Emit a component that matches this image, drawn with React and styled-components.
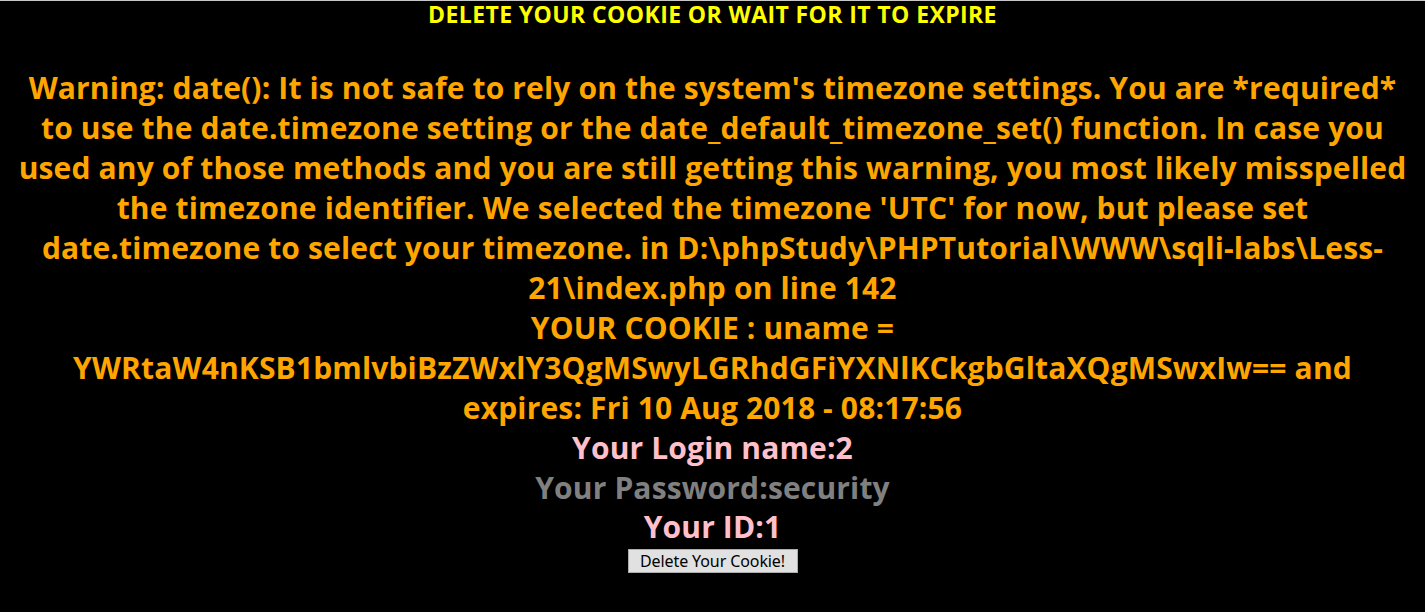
import React from 'react';
import styled, { createGlobalStyle } from 'styled-components';

const GlobalStyle = createGlobalStyle`
  html, body {
    margin: 0;
    padding: 0;
    background: #000;
  }
  body {
    border-top: 1px solid #c8c8c8;
    font-family: "Open Sans", "Noto Sans", sans-serif;
  }
`;

const Page = styled.div`
  min-height: 611px;
  display: flex;
  flex-direction: column;
  align-items: center;
  text-align: center;
  color: #fff;
`;

const Heading = styled.div`
  color: #ffff00;
  font-weight: 700;
  font-size: 23px;
  line-height: 26px;
  letter-spacing: 0.4px;
  margin-bottom: 41px;
`;

const Message = styled.div`
  display: flex;
  flex-direction: column;
  align-items: center;
  font-weight: 700;
  font-size: 30px;
  letter-spacing: 0.15px;
`;

const Line = styled.div`
  color: ${(p) => p.$color || '#ffa500'};
  line-height: ${(p) => (p.$tight ? '38px' : '40px')};
  white-space: nowrap;
`;

const CookieForm = styled.form`
  margin: 3px 0 0;
`;

const DeleteButton = styled.button`
  width: 170px;
  height: 24px;
  padding: 0;
  background: #e1e1e1;
  border: 1px solid #adadad;
  border-radius: 0;
  color: #000;
  font-family: "Noto Sans", "Open Sans", sans-serif;
  font-size: 16px;
  line-height: 22px;
  letter-spacing: -0.1px;
  cursor: pointer;
`;

const warning = [
  "Warning: date(): It is not safe to rely on the system's timezone settings. You are *required*",
  'to use the date.timezone setting or the date_default_timezone_set() function. In case you',
  'used any of those methods and you are still getting this warning, you most likely misspelled',
  "the timezone identifier. We selected the timezone 'UTC' for now, but please set",
  'date.timezone to select your timezone. in D:\\phpStudy\\PHPTutorial\\WWW\\sqli-labs\\Less-',
  '21\\index.php on line 142',
];

const cookie = [
  'YOUR COOKIE : uname =',
  'YWRtaW4nKSB1bmlvbiBzZWxlY3QgMSwyLGRhdGFiYXNlKCkgbGltaXQgMSwxIw== and',
  'expires: Fri 10 Aug 2018 - 08:17:56',
];

export default function App() {
  return (
    <>
      <GlobalStyle />
      <Page>
        <Heading>DELETE YOUR COOKIE OR WAIT FOR IT TO EXPIRE</Heading>
        <Message>
          {warning.map((t) => (
            <Line key={t}>{t}</Line>
          ))}
          {cookie.map((t) => (
            <Line key={t}>{t}</Line>
          ))}
          <Line $color="#ffc0cb">Your Login name:2</Line>
          <Line $color="#808080">Your Password:security</Line>
          <Line $color="#ffc0cb" $tight>Your ID:1</Line>
        </Message>
        <CookieForm onSubmit={(e) => e.preventDefault()}>
          <DeleteButton type="submit">Delete Your Cookie!</DeleteButton>
        </CookieForm>
      </Page>
    </>
  );
}
